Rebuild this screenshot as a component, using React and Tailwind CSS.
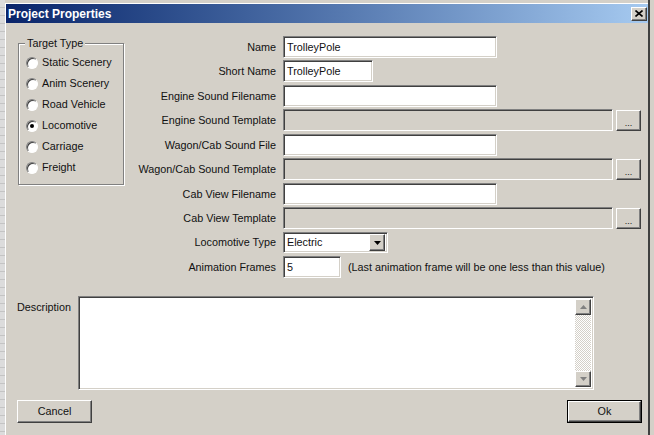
import React from "react";

const sunken =
  "border border-t-[#808080] border-l-[#808080] border-b-white border-r-white shadow-[inset_1px_1px_0_#404040,inset_-1px_-1px_0_#d4d0c8]";
const raised =
  "border border-t-white border-l-white border-b-[#404040] border-r-[#404040] shadow-[inset_-1px_-1px_0_#808080,inset_1px_1px_0_#d4d0c8]";

const Radio = ({ label, checked }) => (
  <div className="flex items-center h-[21px]">
    <span className={"w-[12px] h-[12px] rounded-full bg-white flex items-center justify-center border border-t-[#808080] border-l-[#808080] border-b-white border-r-white shadow-[inset_1px_1px_0_#404040]"}>
      {checked && <span className="w-[4px] h-[4px] rounded-full bg-black" />}
    </span>
    <span className="ml-[4px]">{label}</span>
  </div>
);

const Row = ({ label, children }) => (
  <div className="flex items-center h-[22px]">
    <span className="w-[153px] text-right pr-[7px] whitespace-nowrap">{label}</span>
    {children}
  </div>
);

const TextBox = ({ width, value, disabled }) => (
  <div className={`${sunken} h-[22px] ${disabled ? "bg-[#d4d0c8]" : "bg-white"} flex items-center pl-[3px]`} style={{ width }}>
    {value}
  </div>
);

const DotsButton = () => (
  <button className={`${raised} ml-[3px] w-[25px] h-[21px] bg-[#d4d0c8] text-[9px] leading-none pb-[2px] flex items-end justify-center`}>
    ...
  </button>
);

const Arrow = ({ down }) => (
  <svg width="7" height="4" viewBox="0 0 7 4">
    {down ? <path d="M0 0h7L3.5 4z" fill="#808080" /> : <path d="M0 4h7L3.5 0z" fill="#808080" />}
  </svg>
);

export default function App() {
  return (
    <div className="w-[654px] h-[435px] bg-[#d4d0c8] flex text-[10.8px] text-[#111] font-['Liberation_Sans',Arial,sans-serif]">
      <div className="w-[5px] h-full bg-[repeating-linear-gradient(#dcdcdc_0_7px,#c4c4c4_7px_8px)]" />
      <div className="w-[645px] h-full flex flex-col pt-[3px] border-r-2 border-r-[#404040]">
        <div className="border-t border-l border-white flex flex-col flex-1">
          {/* Title bar */}
          <div className="h-[19px] bg-gradient-to-r from-[#0a246a] to-[#a6caf0] flex items-center pl-[2px] pr-[1px]">
            <span className="text-white font-bold text-[12px]">Project Properties</span>
            <button className={`${raised} ml-auto w-[16px] h-[14px] bg-[#d4d0c8] flex items-center justify-center`}>
              <svg width="8" height="7" viewBox="0 0 8 7">
                <path d="M0.5 0.5L7.5 6.5M7.5 0.5L0.5 6.5" stroke="black" strokeWidth="1.6" />
              </svg>
            </button>
          </div>

          {/* Body */}
          <div className="flex mt-[13px]">
            <div className="w-[124px] pl-[12px] pt-[7px]">
              <div className="relative w-[106px] h-[142px] border border-[#808080] shadow-[inset_1px_1px_0_white,1px_1px_0_white] pl-[7px] pt-[8px]">
                <span className="absolute -top-[8px] left-[6px] bg-[#d4d0c8] px-[2px] leading-[14px]">Target Type</span>
                <Radio label="Static Scenery" />
                <Radio label="Anim Scenery" />
                <Radio label="Road Vehicle" />
                <Radio label="Locomotive" checked />
                <Radio label="Carriage" />
                <Radio label="Freight" />
              </div>
            </div>

            <div className="flex flex-col gap-[2.45px]">
              <Row label="Name"><TextBox width={214} value="TrolleyPole" /></Row>
              <Row label="Short Name"><TextBox width={90} value="TrolleyPole" /></Row>
              <Row label="Engine Sound Filename"><TextBox width={214} /></Row>
              <Row label="Engine Sound Template"><TextBox width={330} disabled /><DotsButton /></Row>
              <Row label="Wagon/Cab Sound File"><TextBox width={214} /></Row>
              <Row label="Wagon/Cab Sound Template"><TextBox width={330} disabled /><DotsButton /></Row>
              <Row label="Cab View Filename"><TextBox width={214} /></Row>
              <Row label="Cab View Template"><TextBox width={330} disabled /><DotsButton /></Row>
              <Row label="Locomotive Type">
                <div className={`${sunken} w-[105px] h-[21px] bg-white flex items-center pl-[3px] pr-[2px]`}>
                  <span>Electric</span>
                  <span className={`${raised} ml-auto w-[16px] h-[17px] bg-[#d4d0c8] flex items-center justify-center`}>
                    <svg width="7" height="4" viewBox="0 0 7 4"><path d="M0 0h7L3.5 4z" fill="black" /></svg>
                  </span>
                </div>
              </Row>
              <Row label="Animation Frames">
                <TextBox width={58} value="5" />
                <span className="ml-[7px] whitespace-nowrap">(Last animation frame will be one less than this value)</span>
              </Row>
            </div>
          </div>

          {/* Description */}
          <div className="flex mt-[18px]">
            <span className="w-[72px] pl-[11px] pt-[3px]">Description</span>
            <div className={`${sunken} w-[516px] h-[94px] bg-white flex justify-end p-[2px]`}>
              <div className="w-[16px] h-full flex flex-col bg-[repeating-conic-gradient(#ffffff_0_25%,#d4d0c8_0_50%)] bg-[length:2px_2px]">
                <div className={`${raised} h-[16px] bg-[#d4d0c8] flex items-center justify-center`}><Arrow /></div>
                <div className="flex-1" />
                <div className={`${raised} h-[16px] bg-[#d4d0c8] flex items-center justify-center`}><Arrow down /></div>
              </div>
            </div>
          </div>

          {/* Buttons */}
          <div className="flex mt-[10px] pl-[11px] pr-[6px]">
            <button className={`${raised} w-[75px] h-[23px] bg-[#d4d0c8]`}>Cancel</button>
            <button className="ml-auto w-[75px] h-[23px] border border-black">
              <span className={`${raised} w-full h-full flex items-center justify-center bg-[#d4d0c8]`}>Ok</span>
            </button>
          </div>
        </div>
      </div>
    </div>
  );
}
